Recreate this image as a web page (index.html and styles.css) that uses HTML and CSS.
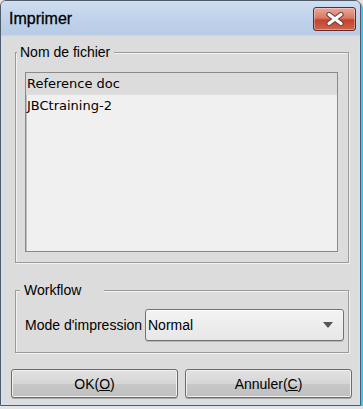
FILE: index.html
```html
<!DOCTYPE html>
<html lang="fr">
  <head>
    <meta charset="UTF-8" />
    <meta name="viewport" content="width=device-width, initial-scale=1.0" />
    <link rel="stylesheet" href="styles.css">
    <title>Imprimer</title>
  </head>
  <body>
    <div class="window">
      <div class="titlebar">
        <span class="title">Imprimer</span>
        <button class="closeBtn" title="Fermer">
          <svg width="20" height="14" viewBox="0 0 20 14">
            <path d="M4 2.5 L16 11.5 M16 2.5 L4 11.5" stroke="#6a3a3a" stroke-width="5.2" stroke-linecap="round" fill="none" />
            <path d="M4 2.5 L16 11.5 M16 2.5 L4 11.5" stroke="#ffffff" stroke-width="3.2" stroke-linecap="round" fill="none" />
          </svg>
        </button>
      </div>

      <div class="client">
        <fieldset class="group files">
          <legend>Nom de fichier</legend>
          <ul class="fileList">
            <li class="selected">Reference doc</li>
            <li>JBCtraining-2</li>
          </ul>
        </fieldset>

        <fieldset class="group workflow">
          <legend>Workflow</legend>
          <div class="row">
            <label for="mode">Mode d'impression</label>
            <div class="select" id="mode">
              <span>Normal</span>
              <span class="arrow"></span>
            </div>
          </div>
        </fieldset>

        <div class="buttons">
          <button class="btn">OK(<u>O</u>)</button>
          <button class="btn">Annuler(<u>C</u>)</button>
        </div>
      </div>
    </div>
  </body>
</html>
```

FILE: styles.css
```css
* {
  box-sizing: border-box;
}
body {
  margin: 0;
  background: #e4e4e4;
  font-family: "Liberation Sans", Arial, sans-serif;
  font-size: 14px;
  color: #000;
}

.window {
  width: 361px;
  height: 406px;
  border: 1px solid #4f5b69;
  border-radius: 6px 6px 0 0;
  background: #d3e0ef;
  padding: 0 2px 2px;
  display: flex;
  flex-direction: column;
  box-shadow: 2px 2px 0 #3ec8ea;
}

.titlebar {
  height: 35px;
  margin: 0 -2px;
  padding: 0 4px 0 8px;
  display: flex;
  align-items: center;
  justify-content: space-between;
  border-radius: 5px 5px 0 0;
  background: linear-gradient(#cfdef0, #bfd2ea 55%, #b7cce6 95%, #c9d9ec);
}
.title {
  font-size: 16px;
  -webkit-text-stroke: 0.3px #000;
}
.closeBtn {
  width: 43px;
  height: 24px;
  padding: 0;
  display: flex;
  align-items: center;
  justify-content: center;
  border: 1px solid #5e2b2b;
  border-radius: 3px;
  background: linear-gradient(#eaa898, #d97a64 45%, #c4432d 55%, #d0644d);
  box-shadow: inset 0 0 0 1px rgba(255, 255, 255, 0.35);
}

.client {
  flex: 1;
  background: #dcdcdc;
  padding-top: 8px;
}

.group {
  margin: 0 0 0 12px;
  width: 334px;
  border: 1px solid #9a9a9a;
  box-shadow: inset 1px 1px 0 #f2f2f2, 1px 1px 0 #f2f2f2;
  min-width: 0;
}
.group legend {
  line-height: 16px;
  background: #dcdcdc;
}
.files {
  padding: 12px 10px 10px 9px;
}
.files legend {
  margin-left: -8px;
  padding: 0 4px 0 3px;
}
.workflow {
  margin-top: 19px;
  padding: 11px 4px 11px 9px;
}
.workflow legend {
  margin-left: -5px;
  padding: 0 23px 0 4px;
}

.fileList {
  list-style: none;
  margin: 0;
  padding: 0;
  height: 180px;
  border: 1px solid #8a8a8a;
  box-shadow: inset 1px 1px 0 #bdbdbd;
  background: #f0f0f0;
  font-family: "DejaVu Sans", Verdana, sans-serif;
  font-size: 13px;
}
.fileList li {
  height: 22px;
  line-height: 22px;
  padding-left: 1px;
}
.fileList .selected {
  background: #dcdcdc;
}

.row {
  display: flex;
  align-items: center;
}
.row label {
  width: 120px;
  white-space: nowrap;
}
.select {
  flex: 1;
  height: 32px;
  display: flex;
  align-items: center;
  justify-content: space-between;
  padding: 0 10px 0 2px;
  border: 1px solid #727272;
  border-radius: 3px;
  background: linear-gradient(#f3f3f3, #e7e7e7);
  box-shadow: inset 0 1px 0 #fff, 0 1px 0 #b8b8b8;
}
.arrow {
  width: 0;
  height: 0;
  border-left: 5px solid transparent;
  border-right: 5px solid transparent;
  border-top: 6px solid #555;
}

.buttons {
  margin: 16px 0 0 8px;
  display: flex;
  gap: 7px;
}
.btn {
  width: 167px;
  height: 29px;
  font-family: "Liberation Sans", Arial, sans-serif;
  font-size: 14px;
  color: #000;
  border: 1px solid #6c6c6c;
  border-radius: 3px;
  background: linear-gradient(#e2e2e2, #d6d6d6 50%, #c8c8c8 52%, #bfbfbf);
  box-shadow: inset 0 0 0 1px #f0f0f0, 0 1px 0 #a8a8a8;
}
```
